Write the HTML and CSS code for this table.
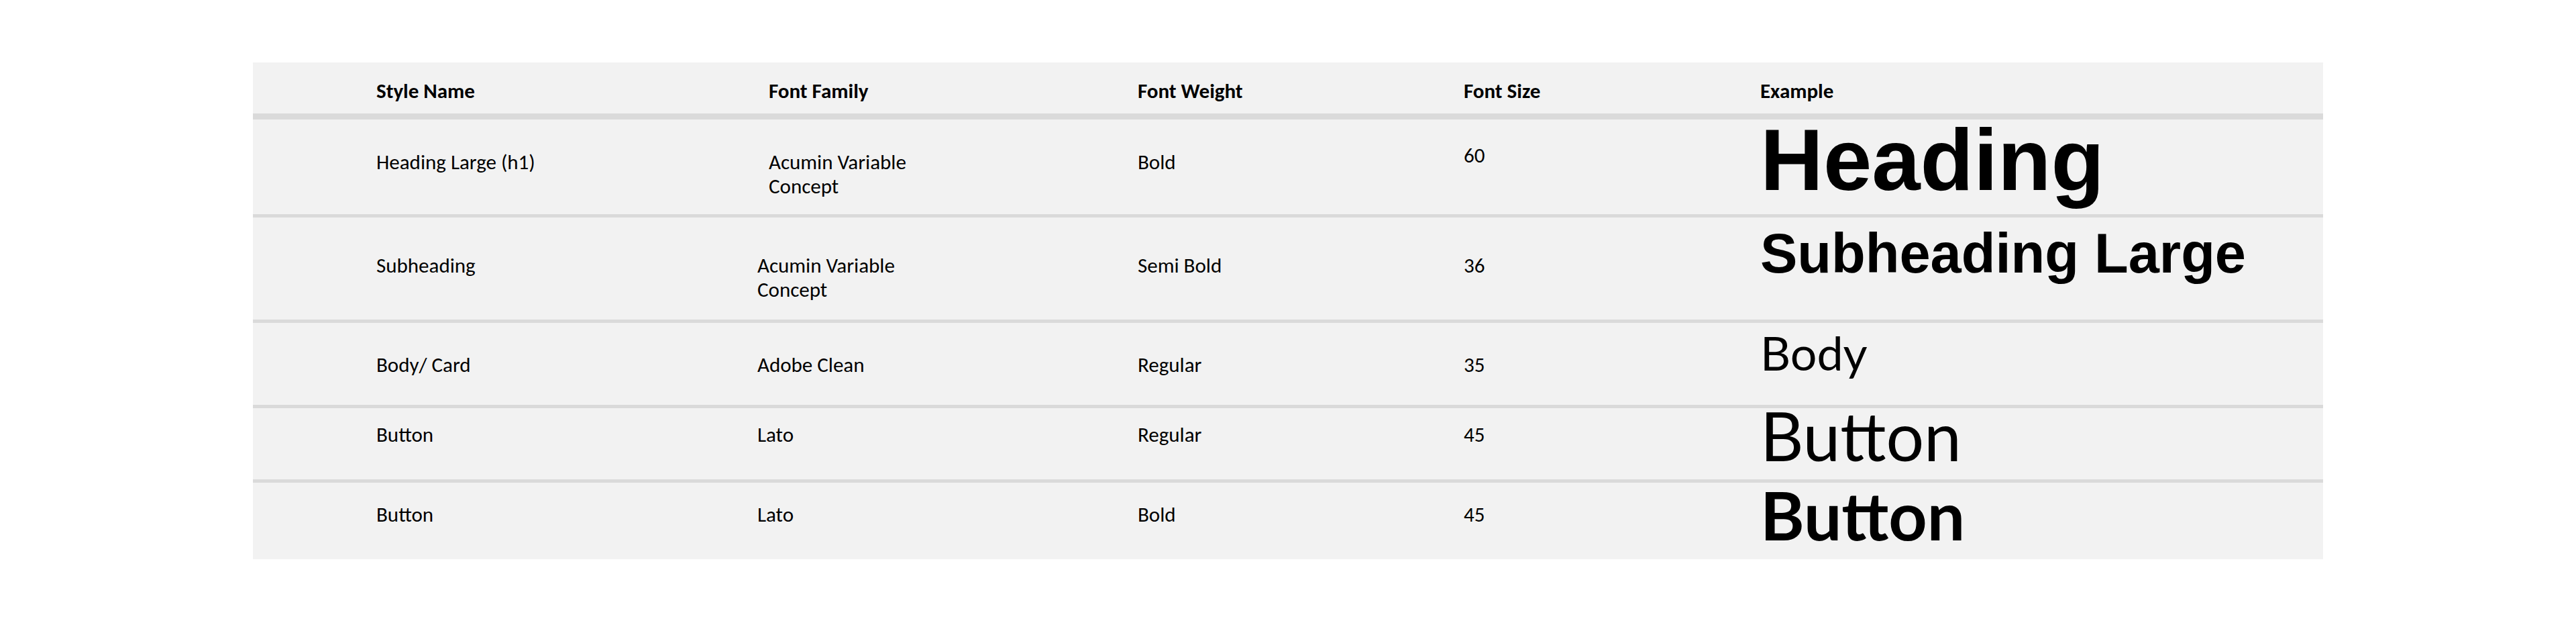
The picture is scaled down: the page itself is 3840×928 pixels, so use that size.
FILE: index.html
```html
<!DOCTYPE html>
<html lang="en">
<head>
<meta charset="utf-8">
<title>Typography Styles</title>
<link rel="stylesheet" href="styles.css">
</head>
<body>
<main class="page">
  <section class="type-table">
    <div class="row row-head">
      <div class="cell">Style Name</div>
      <div class="cell">Font Family</div>
      <div class="cell">Font Weight</div>
      <div class="cell">Font Size</div>
      <div class="cell">Example</div>
    </div>
    <div class="row row-1">
      <div class="cell">Heading Large (h1)</div>
      <div class="cell family">Acumin Variable Concept</div>
      <div class="cell">Bold</div>
      <div class="cell size-top">60</div>
      <div class="cell example ex-h1">Heading</div>
    </div>
    <div class="row row-2">
      <div class="cell">Subheading</div>
      <div class="cell family shifted">Acumin Variable Concept</div>
      <div class="cell">Semi Bold</div>
      <div class="cell">36</div>
      <div class="cell example ex-sub">Subheading Large</div>
    </div>
    <div class="row row-3">
      <div class="cell">Body/ Card</div>
      <div class="cell family shifted">Adobe Clean</div>
      <div class="cell">Regular</div>
      <div class="cell">35</div>
      <div class="cell example ex-body">Body</div>
    </div>
    <div class="row row-4">
      <div class="cell">Button</div>
      <div class="cell family shifted">Lato</div>
      <div class="cell">Regular</div>
      <div class="cell">45</div>
      <div class="cell example ex-btn">Button</div>
    </div>
    <div class="row row-5">
      <div class="cell">Button</div>
      <div class="cell family shifted">Lato</div>
      <div class="cell">Bold</div>
      <div class="cell">45</div>
      <div class="cell example ex-btn-bold">Button</div>
    </div>
  </section>
</main>
</body>
</html>
```

FILE: styles.css
```css
* {
  box-sizing: border-box;
  margin: 0;
  padding: 0;
}

html, body {
  background: #ffffff;
}

body {
  font-family: Carlito, "Open Sans", "Liberation Sans", sans-serif;
  color: #000000;
  font-size: 31px;
  line-height: 36px;
}

.page {
  padding: 93px 0 0 377px;
}

.type-table {
  width: 3086px;
  background: #f2f2f2;
}

.row {
  display: grid;
  grid-template-columns: 585px 550px 486px 442px 1fr;
  align-items: start;
  padding-left: 184px;
  border-bottom: 5px solid #dadada;
}

.row-head {
  height: 85px;
  border-bottom-width: 9px;
  font-weight: 700;
}
.row-head .cell { padding-top: 24px; }

.row-1 { height: 146px; }
.row-1 .cell { padding-top: 45px; }
.row-1 .size-top { padding-top: 35px; }

.row-2 { height: 157px; }
.row-2 .cell { padding-top: 53px; }

.row-3 { height: 127px; }
.row-3 .cell { padding-top: 44px; }

.row-4 { height: 111px; }
.row-4 .cell { padding-top: 21px; }

.row-5 {
  height: 114px;
  border-bottom: none;
}
.row-5 .cell { padding-top: 29px; }

.family {
  max-width: 250px;
}
.family.shifted {
  margin-left: -17px;
}

.row .example {
  padding-top: 0;
  line-height: 1;
  white-space: nowrap;
}

.ex-h1 {
  font-family: "Liberation Sans", Arial, sans-serif;
  font-weight: 700;
  font-size: 130px;
  margin-top: -5px;
}

.ex-sub {
  font-family: "Liberation Sans", Arial, sans-serif;
  font-weight: 700;
  font-size: 83px;
  margin-top: 12px;
}

.ex-body {
  font-family: Lato, sans-serif;
  font-weight: 400;
  font-size: 70px;
  margin-top: 9px;
}

.ex-btn {
  font-family: Lato, sans-serif;
  font-weight: 400;
  font-size: 100px;
  margin-top: -10px;
}

.ex-btn-bold {
  font-family: Lato, sans-serif;
  font-weight: 700;
  font-size: 100px;
  margin-top: -3px;
}
```
